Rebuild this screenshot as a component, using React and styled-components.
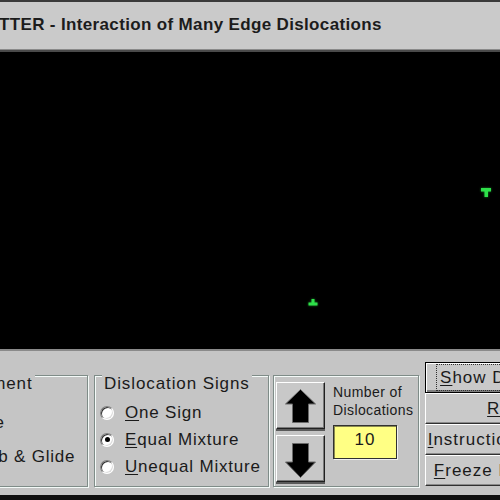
import React from "react";
import styled, { createGlobalStyle } from "styled-components";

const Global = createGlobalStyle`
  html, body { margin: 0; padding: 0; width: 500px; height: 500px; overflow: hidden; background: #000; }
  * { box-sizing: border-box; }
  body { font-family: "Liberation Sans", Arial, sans-serif; }
`;

const Screen = styled.div`
  width: 500px;
  height: 500px;
  overflow: hidden;
  display: flex;
  flex-direction: column;
  background: #c5c5c5;
`;

const TopEdge = styled.div`
  height: 2px;
  background: #3a3a3a;
  flex-shrink: 0;
`;

const TitleBar = styled.div`
  height: 50px;
  flex-shrink: 0;
  background: #cacaca;
  border-bottom: 2px solid #4a4a4a;
  box-shadow: inset 0 -1px 0 #8a8a8a;
  font-weight: bold;
  font-size: 17px;
  letter-spacing: 0.35px;
  line-height: 45px;
  color: #1c1c1c;
  white-space: nowrap;
  overflow: hidden;
`;

const TitleText = styled.span`
  margin-left: -1px;
  display: inline-block;
`;

const Canvas = styled.div`
  position: relative;
  height: 297px;
  flex-shrink: 0;
  background: #000;
`;

const Mark = styled.svg`
  position: absolute;
  left: ${(p) => p.$x}px;
  top: ${(p) => p.$y}px;
  filter: blur(0.4px) drop-shadow(0 0 1px rgba(40, 220, 60, 0.6));
`;

const Panel = styled.div`
  height: 146px;
  flex-shrink: 0;
  border-top: 2px solid #8a8a8a;
  background: #c5c5c5;
  display: flex;
  align-items: flex-start;
  padding-top: 11px;
  overflow: hidden;
`;

const Group = styled.div`
  position: relative;
  flex-shrink: 0;
  margin-top: 13px;
  margin-left: ${(p) => p.$ml}px;
  width: ${(p) => p.$w}px;
  height: 112px;
  border: 1px solid #7f8c88;
  box-shadow: 1px 1px 0 #f4faf8, inset 1px 1px 0 #f4faf8;
  padding-top: ${(p) => p.$pt}px;
  padding-left: ${(p) => p.$pl || 0}px;
`;

const Legend = styled.div`
  position: absolute;
  top: -2px;
  left: ${(p) => p.$left || 7}px;
  padding: 0 2px;
  background: #c5c5c5;
  font-size: 17px;
  letter-spacing: 0.9px;
  line-height: 20px;
  color: #1a1a1a;
  white-space: nowrap;
`;

const RadioRow = styled.div`
  height: ${(p) => p.$h}px;
  display: flex;
  align-items: center;
  gap: 11px;
  padding-left: 5px;
  font-size: 17px;
  letter-spacing: 0.8px;
  color: #1a1a1a;
  white-space: nowrap;
`;

const RadioDot = styled.span`
  position: relative;
  flex-shrink: 0;
  width: 14px;
  height: 14px;
  border-radius: 50%;
  background: #ffffff;
  border: 1px solid;
  border-color: #808080 #ffffff #ffffff #808080;
  box-shadow: inset 1px 1px 0 #303030, inset -1px -1px 0 #dcdcdc;
  &::after {
    content: "";
    position: absolute;
    left: 3.5px;
    top: 3.5px;
    width: 5px;
    height: 5px;
    border-radius: 50%;
    background: ${(p) => (p.$on ? "#000" : "transparent")};
  }
`;

const Key = styled.span`
  text-decoration: underline;
  text-underline-offset: 2px;
`;

const Controls = styled.div`
  display: flex;
  gap: 8px;
`;

const ArrowStack = styled.div`
  display: flex;
  flex-direction: column;
  gap: 6px;
`;

const ArrowButton = styled.button`
  width: 49px;
  height: 47px;
  padding: 0;
  display: flex;
  align-items: center;
  justify-content: center;
  background: #c8c8c8;
  border: 1px solid;
  border-color: #ffffff #202020 #202020 #ffffff;
  box-shadow: inset -1px -1px 0 #7a7a7a, 0 2px 0 #5a5a5a;
`;

const NumberBox = styled.div`
  display: flex;
  flex-direction: column;
  padding-top: 1px;
`;

const NumberLabel = styled.div`
  font-size: 14px;
  letter-spacing: 0.4px;
  line-height: 18px;
  color: #1a1a1a;
  white-space: nowrap;
`;

const Count = styled.div`
  margin-top: 6px;
  width: 64px;
  height: 34px;
  background: #ffff84;
  border: 1px solid #303030;
  box-shadow: 1px 1px 0 #f0f0f0, inset 1px 1px 0 #8a8a50;
  font-size: 17px;
  letter-spacing: 1px;
  line-height: 28px;
  text-align: center;
  color: #1a1a1a;
`;

const ButtonColumn = styled.div`
  flex-shrink: 0;
  margin-left: 6px;
  display: flex;
  flex-direction: column;
`;

const CmdButton = styled.button`
  width: 186px;
  height: 31px;
  padding: 0;
  background: #c9c9c9;
  font-family: "Liberation Sans", Arial, sans-serif;
  font-size: 17px;
  letter-spacing: 1px;
  color: #1a1a1a;
  text-align: center;
  white-space: nowrap;
  overflow: hidden;
  border: 1px solid;
  border-color: ${(p) => (p.$default ? "#000" : "#ffffff #303030 #303030 #ffffff")};
  box-shadow: ${(p) =>
    p.$default
      ? "inset 1px 1px 0 #ffffff, inset -2px -2px 0 #808080"
      : "inset -1px -1px 0 #8a8a8a"};
`;

const FocusLabel = styled.span`
  outline: 1px dotted #303030;
  outline-offset: 3px;
`;

const BottomEdge = styled.div`
  height: 5px;
  flex-shrink: 0;
  background: #101010;
`;

const UpArrow = () => (
  <svg width="31" height="34" viewBox="0 0 31 34">
    <polygon
      points="15.5,0.5 30.5,15 23.5,15 23.5,33.5 7.5,33.5 7.5,15 0.5,15"
      fill="#000"
      stroke="#6a6a6a"
      strokeWidth="1"
    />
  </svg>
);

const DownArrow = () => (
  <svg width="31" height="35" viewBox="0 0 31 35" style={{ marginTop: 4 }}>
    <polygon
      points="7.5,0.5 23.5,0.5 23.5,19 30.5,19 15.5,34.5 0.5,19 7.5,19"
      fill="#000"
      stroke="#6a6a6a"
      strokeWidth="1"
    />
  </svg>
);

export default function App() {
  return (
    <>
      <Global />
      <Screen>
        <TopEdge />
        <TitleBar>
          <TitleText>TTER - Interaction of Many Edge Dislocations</TitleText>
        </TitleBar>
        <Canvas>
          <Mark $x={481} $y={136} width="10" height="10" viewBox="0 0 10 10">
            <rect x="0" y="0" width="10" height="3.5" fill="#2ee04a" />
            <rect x="3.5" y="0" width="3.5" height="9" fill="#2ee04a" />
          </Mark>
          <Mark $x={308} $y={247} width="10" height="8" viewBox="0 0 10 8">
            <rect x="3.5" y="0" width="3" height="5" fill="#2ee04a" />
            <rect x="0.5" y="3.5" width="9" height="3" fill="#2ee04a" />
          </Mark>
        </Canvas>
        <Panel>
          <Group $ml={-70} $w={158} $pt={30}>
            <Legend $left={13}>Movement</Legend>
            <RadioRow $h={34}>
              <RadioDot $on />
              <span>Glide</span>
            </RadioRow>
            <RadioRow $h={34}>
              <RadioDot />
              <span>
                <Key>C</Key>limb &amp; Glide
              </span>
            </RadioRow>
          </Group>
          <Group $ml={6} $w={175} $pt={23}>
            <Legend>Dislocation Signs</Legend>
            <RadioRow $h={27}>
              <RadioDot />
              <span>
                <Key>O</Key>ne Sign
              </span>
            </RadioRow>
            <RadioRow $h={27}>
              <RadioDot $on />
              <span>
                <Key>E</Key>qual Mixture
              </span>
            </RadioRow>
            <RadioRow $h={27}>
              <RadioDot />
              <span>
                <Key>U</Key>nequal Mixture
              </span>
            </RadioRow>
          </Group>
          <Group $ml={4} $w={146} $pt={6} $pl={2}>
            <Controls>
              <ArrowStack>
                <ArrowButton aria-label="More">
                  <UpArrow />
                </ArrowButton>
                <ArrowButton aria-label="Fewer">
                  <DownArrow />
                </ArrowButton>
              </ArrowStack>
              <NumberBox>
                <NumberLabel>Number of</NumberLabel>
                <NumberLabel>Dislocations</NumberLabel>
                <Count>10</Count>
              </NumberBox>
            </Controls>
          </Group>
          <ButtonColumn>
            <CmdButton $default>
              <FocusLabel>
                <Key>S</Key>how Dislocations
              </FocusLabel>
            </CmdButton>
            <CmdButton>
              <Key>R</Key>estart
            </CmdButton>
            <CmdButton>
              <Key>I</Key>nstructions and Help
            </CmdButton>
            <CmdButton>
              <Key>F</Key>reeze Dislocations
            </CmdButton>
          </ButtonColumn>
        </Panel>
        <BottomEdge />
      </Screen>
    </>
  );
}
